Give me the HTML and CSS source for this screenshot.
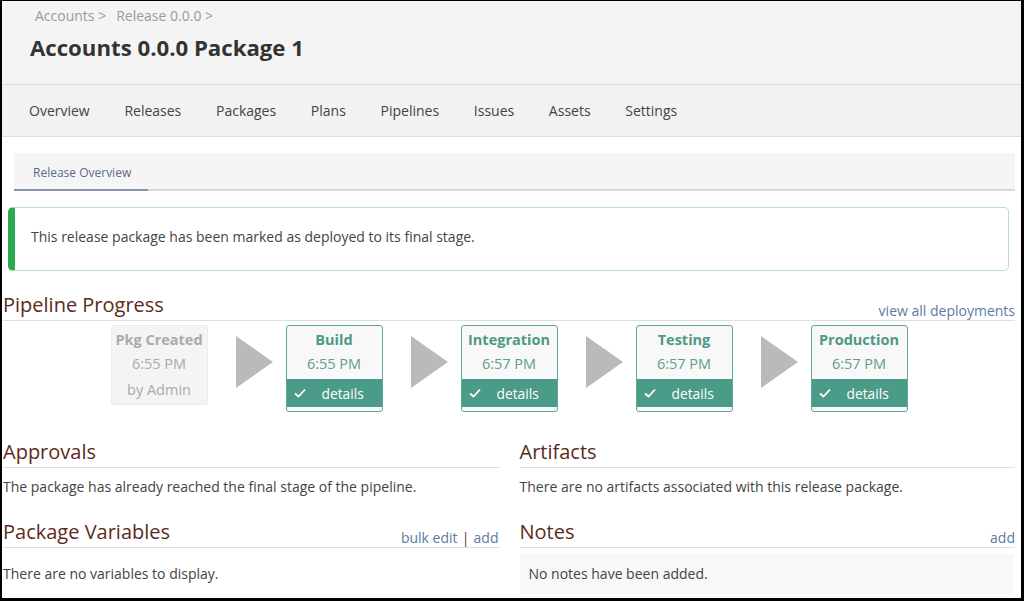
FILE: index.html
```html
<!DOCTYPE html>
<html lang="en">
<head>
<meta charset="utf-8">
<title>Accounts 0.0.0 Package 1</title>
<link rel="stylesheet" href="styles.css">
</head>
<body>
<div class="frame">
  <header class="page-header">
    <div class="crumbs"><span>Accounts &gt;</span><span>Release 0.0.0 &gt;</span></div>
    <h1 class="title">Accounts 0.0.0 Package 1</h1>
  </header>
  <nav class="main-nav">
    <a>Overview</a><a>Releases</a><a>Packages</a><a>Plans</a><a>Pipelines</a><a>Issues</a><a>Assets</a><a>Settings</a>
  </nav>
  <main class="content">
    <div class="subtabs"><a class="subtab active">Release Overview</a></div>
    <div class="alert">This release package has been marked as deployed to its final stage.</div>

    <div class="section-head top">
      <h2>Pipeline Progress</h2>
      <a class="link">view all deployments</a>
    </div>
    <div class="stages">
      <div class="stage created">
        <div class="st-name">Pkg Created</div>
        <div class="st-time">6:55 PM</div>
        <div class="st-by">by Admin</div>
      </div>
      <div class="arrow"></div>
      <div class="stage done">
        <div class="st-name">Build</div>
        <div class="st-time">6:55 PM</div>
        <div class="st-details"><svg class="check" viewBox="0 0 12 10" width="12" height="10"><polyline points="1,5.5 4.5,8.5 11,1.5" fill="none" stroke="#fff" stroke-width="1.8"/></svg><span>details</span></div>
      </div>
      <div class="arrow"></div>
      <div class="stage done">
        <div class="st-name">Integration</div>
        <div class="st-time">6:57 PM</div>
        <div class="st-details"><svg class="check" viewBox="0 0 12 10" width="12" height="10"><polyline points="1,5.5 4.5,8.5 11,1.5" fill="none" stroke="#fff" stroke-width="1.8"/></svg><span>details</span></div>
      </div>
      <div class="arrow"></div>
      <div class="stage done">
        <div class="st-name">Testing</div>
        <div class="st-time">6:57 PM</div>
        <div class="st-details"><svg class="check" viewBox="0 0 12 10" width="12" height="10"><polyline points="1,5.5 4.5,8.5 11,1.5" fill="none" stroke="#fff" stroke-width="1.8"/></svg><span>details</span></div>
      </div>
      <div class="arrow"></div>
      <div class="stage done">
        <div class="st-name">Production</div>
        <div class="st-time">6:57 PM</div>
        <div class="st-details"><svg class="check" viewBox="0 0 12 10" width="12" height="10"><polyline points="1,5.5 4.5,8.5 11,1.5" fill="none" stroke="#fff" stroke-width="1.8"/></svg><span>details</span></div>
      </div>
    </div>

    <div class="columns">
      <div class="col">
        <div class="section-head"><h2>Approvals</h2></div>
        <p class="para first">The package has already reached the final stage of the pipeline.</p>
        <div class="section-head"><h2>Package Variables</h2><span class="links"><a class="link">bulk edit</a> <span class="sep">|</span> <a class="link">add</a></span></div>
        <p class="para boxed">There are no variables to display.</p>
      </div>
      <div class="col">
        <div class="section-head"><h2>Artifacts</h2></div>
        <p class="para first">There are no artifacts associated with this release package.</p>
        <div class="section-head"><h2>Notes</h2><a class="link">add</a></div>
        <p class="para boxed notes">No notes have been added.</p>
      </div>
    </div>
  </main>
</div>
</body>
</html>
```
FILE: styles.css
```css
* { box-sizing: border-box; }
html, body { margin: 0; padding: 0; background: #000; }
body { font-family: "Open Sans", "Noto Sans", sans-serif; color: #444; }
.frame {
  width: 1024px; height: 601px; overflow: hidden; background: #fff;
  border-style: solid; border-color: #000;
  border-width: 1px 3px 3px 2px;
}
.page-header {
  background: #f4f4f4; height: 84px;
  border-bottom: 1px solid #f3d6ce;
  padding: 5px 0 0 28px;
}
.crumbs { font-size: 14px; color: #9a9a9a; line-height: 20px; padding-left: 5px; display: flex; gap: 10px; }
.title { margin: 8px 0 0; font-size: 22.2px; font-weight: 700; color: #333; line-height: 28px; }
.main-nav {
  background: #f2f2f2; height: 52px;
  border-bottom: 1px solid #f3d6ce;
  display: flex; align-items: center; gap: 34.7px; padding: 1px 0 0 27px;
  font-size: 14px; color: #444;
}
.main-nav a { line-height: 20px; }
.content { padding: 16px 6px 0 1px; }
.subtabs {
  margin-left: 11px; height: 38px; background: #f5f5f5;
  border-bottom: 2px solid #d3d8e0; display: flex;
}
.subtab { font-size: 12px; color: #5a6a85; padding: 3px 17px 0 19px; display: flex; align-items: center; height: 38px; }
.subtab.active { border-bottom: 2px solid #8896aa; }
.alert {
  margin: 16px 6px 0 5px; height: 64px;
  border: 1px solid #b9e2c2; border-left: 7px solid #2eaa4e; border-radius: 5px;
  padding: 0 0 6px 16px; display: flex; align-items: center;
  font-size: 14px; color: #444;
}
.section-head {
  display: flex; justify-content: space-between; align-items: flex-end;
  border-bottom: 1px solid #dedede; padding-bottom: 2px;
}
.section-head.top { margin-top: 21px; }
h2 { margin: 0; font-size: 20px; font-weight: 400; color: #5c2b1b; line-height: 26px; }
.link { color: #5c7ba1; font-size: 14px; line-height: 14px; }
.sep { color: #444; font-size: 14px; }
.links { white-space: nowrap; line-height: 14px; }
.stages { display: flex; justify-content: center; align-items: flex-start; margin-top: 4px; }
.stage { width: 97px; text-align: center; border-radius: 3px; flex: none; }
.stage.created { height: 80px; background: #f4f4f4; border: 1px solid #ececec; color: #aaa; }
.stage.done { height: 87px; background: #f8f8f8; border: 1px solid #5fa898; color: #5e9d8f; padding-bottom: 4px; }
.st-name { font-weight: 700; font-size: 14.5px; line-height: 20px; margin-top: 4px; }
.stage.done .st-name { color: #4e9985; }
.st-time { font-size: 14.5px; line-height: 20px; margin-top: 4px; }
.st-by { font-size: 14.5px; line-height: 20px; margin-top: 6px; }
.st-details {
  margin-top: 5px; height: 28px; background: #4a9b87; color: #fff;
  display: flex; align-items: center; font-size: 13.8px; padding-left: 7px;
}
.st-details span { margin-left: 16px; }
.check { display: block; }
.arrow {
  flex: none;
  width: 0; height: 0; margin: 11px 13px 0 28px;
  border-top: 26px solid transparent; border-bottom: 26px solid transparent;
  border-left: 37px solid #bababa;
}
.columns { display: grid; grid-template-columns: 1fr 1fr; column-gap: 21px; margin-top: 27px; }
.para { margin: 0; font-size: 14px; line-height: 20px; color: #444; }
.para.first { margin-top: 9px; margin-bottom: 22px; }
.para.boxed { margin-top: 6px; padding: 10px 0; }
.para.notes { background: #f8f8f8; padding: 10px 9px; margin-right: 2px; }
```
